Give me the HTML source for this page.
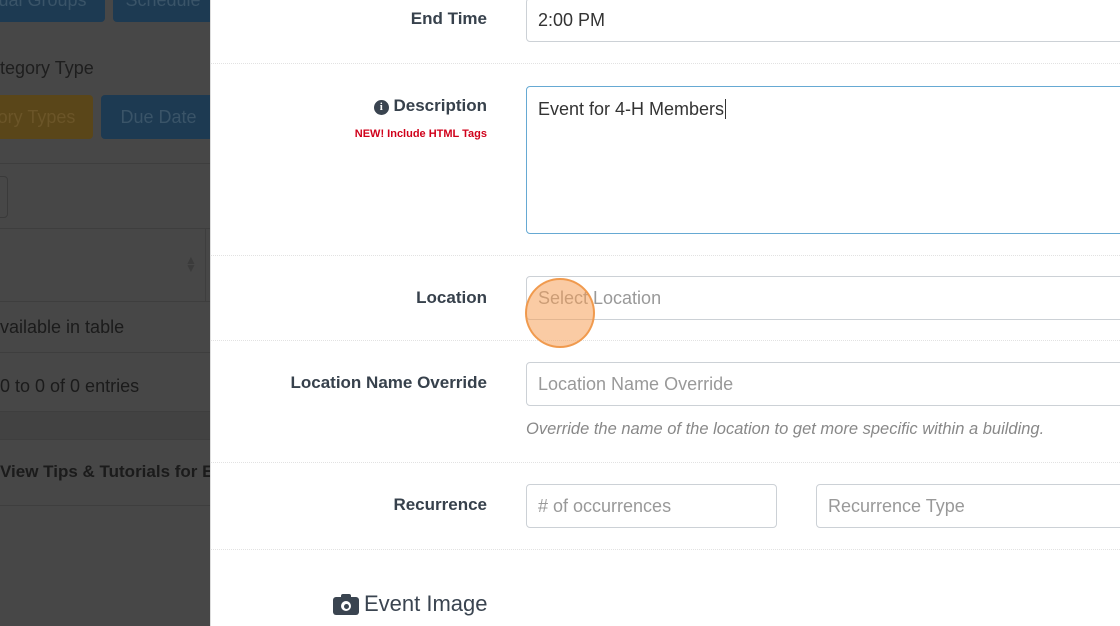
<!DOCTYPE html>
<html><head><meta charset="utf-8"><style>
*{box-sizing:border-box;margin:0;padding:0}
body{width:1120px;height:626px;overflow:hidden;position:relative;background:#fff;font-family:"Liberation Sans",sans-serif;}
.left{position:absolute;left:0;top:0;width:210px;height:626px;background:#474747;color:#1b1b1b;overflow:hidden}
.left .t{position:absolute;white-space:nowrap;font-size:18px}
.btn{position:absolute;border-radius:4px;color:#3a5468;font-size:18px;padding:0 0;text-align:center;line-height:44px}
.hl{position:absolute;left:0;width:210px;height:1px;background:#3e3e3e}
.right{position:absolute;left:210px;top:0;width:910px;height:626px;background:#fff;border-left:1px solid #ddd}
.lbl{position:absolute;right:633px;font-weight:bold;font-size:17px;color:#37414c;white-space:nowrap;text-align:right}
.inp{position:absolute;left:526px;border:1px solid #ccd1d6;border-radius:4px;height:44px;font-size:18px;color:#999;padding:0 11px;line-height:42px;white-space:nowrap;overflow:hidden}
.sep{position:absolute;left:210px;width:910px;border-top:1px dotted #e2e2e2}
</style></head><body>
<div class="left">
 <div class="btn" style="left:-20px;top:-22px;width:125px;background:#1d3a52;">ual Groups</div>
 <div class="btn" style="left:113px;top:-22px;width:100px;background:#1d3a52;">Schedule</div>
 <div class="t" style="left:0;top:58px;color:#1e1e1e">tegory Type</div>
 <div class="btn" style="left:-20px;top:95px;width:113px;background:#5a4619;color:#6b5528">ory Types</div>
 <div class="btn" style="left:101px;top:95px;width:115px;background:#1d3a52;">Due Date</div>
 <div class="hl" style="top:163px"></div>
 <div style="position:absolute;left:-10px;top:176px;width:18px;height:42px;border:1px solid #3a3a3a;border-radius:4px"></div>
 <div class="hl" style="top:228px"></div>
 <div style="position:absolute;left:185px;top:256px;color:#3b3b3b;font-size:12px;line-height:8px">▲<br>▼</div>
 <div style="position:absolute;left:205px;top:228px;width:1px;height:73px;background:#3e3e3e"></div>
 <div class="hl" style="top:301px"></div>
 <div class="t" style="left:0;top:317px">vailable in table</div>
 <div class="hl" style="top:352px"></div>
 <div class="t" style="left:0;top:376px">0 to 0 of 0 entries</div>
 <div class="hl" style="top:411px"></div>
 <div style="position:absolute;left:0;top:412px;width:210px;height:27px;background:#424242"></div>
 <div class="hl" style="top:439px"></div>
 <div class="t" style="left:0;top:462px;font-weight:bold;font-size:17px">View Tips &amp; Tutorials for Ev</div>
 <div class="hl" style="top:505px"></div>
</div>
<div class="right"></div>
<div class="sep" style="top:63px"></div>
<div class="sep" style="top:255px"></div>
<div class="sep" style="top:340px"></div>
<div class="sep" style="top:462px"></div>
<div class="sep" style="top:549px"></div>

<div class="lbl" style="top:9px">End Time</div>
<div class="inp" style="top:-2px;width:600px;color:#333">2:00 PM</div>

<div class="lbl" style="top:96px"><span style="display:inline-block;width:15px;height:15px;border-radius:50%;background:#3a4450;color:#fff;font-size:11px;line-height:15px;text-align:center;font-family:'Liberation Serif',serif;vertical-align:1px">i</span> Description</div>
<div class="lbl" style="top:128px;font-size:11px;color:#d0021b">NEW! Include HTML Tags</div>
<div class="inp" style="top:86px;height:148px;width:600px;border-color:#66a9d3;color:#333;line-height:44px">Event for 4-H Members<span style="border-left:1px solid #333;margin-left:1px"></span></div>

<div class="lbl" style="top:288px">Location</div>
<div class="inp" style="top:276px;width:600px">Select Location</div>

<div class="lbl" style="top:373px">Location Name Override</div>
<div class="inp" style="top:362px;width:600px">Location Name Override</div>
<div style="position:absolute;left:526px;top:420px;font-size:16.5px;font-style:italic;color:#888;white-space:nowrap">Override the name of the location to get more specific within a building.</div>

<div class="lbl" style="top:495px">Recurrence</div>
<div class="inp" style="top:484px;width:251px">#&nbsp;of occurrences</div>
<div class="inp" style="top:484px;left:816px;width:320px">Recurrence Type</div>

<div style="position:absolute;left:333px;top:594px;width:26px;height:22px;">
 <div style="position:absolute;left:8px;top:0;width:10px;height:5px;background:#3a4450;border-radius:2px 2px 0 0"></div>
 <div style="position:absolute;left:0;top:3px;width:26px;height:18px;background:#3a4450;border-radius:3px"></div>
 <div style="position:absolute;left:8px;top:7px;width:10px;height:10px;border-radius:50%;background:#fff"></div>
 <div style="position:absolute;left:10.5px;top:9.5px;width:5px;height:5px;border-radius:50%;background:#3a4450"></div>
</div>
<div style="position:absolute;left:364px;top:591px;font-size:22px;color:#3a4450">Event Image</div>

<div style="position:absolute;left:525px;top:278px;width:70px;height:70px;border-radius:50%;background:rgba(245,160,90,0.55);border:2px solid rgba(240,150,70,0.9)"></div>
</body></html>
